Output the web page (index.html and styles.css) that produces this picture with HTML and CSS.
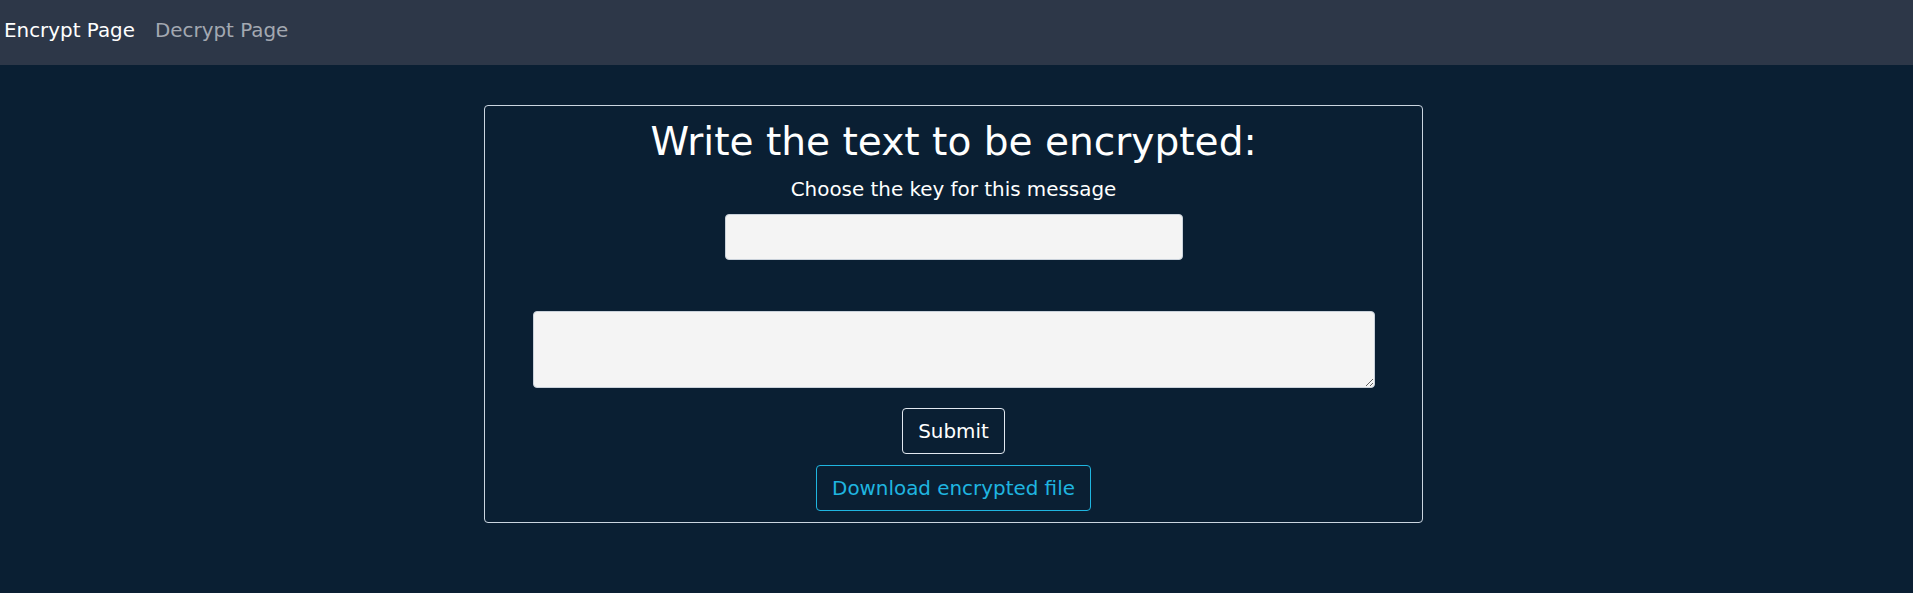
FILE: index.html
```html
<!DOCTYPE html>
<html lang="en">
<head>
<meta charset="utf-8">
<title>Encrypt Page</title>
<link rel="stylesheet" href="styles.css">
</head>
<body>
<nav class="navbar">
  <a class="nav-link active" href="#">Encrypt Page</a>
  <a class="nav-link" href="#">Decrypt Page</a>
</nav>
<main class="page">
  <form class="card">
    <h1 class="title">Write the text to be encrypted:</h1>
    <label class="label" for="key">Choose the key for this message</label>
    <input class="key-input" id="key" type="text">
    <textarea class="message"></textarea>
    <button class="btn btn-submit" type="button">Submit</button>
    <button class="btn btn-download" type="button">Download encrypted file</button>
  </form>
</main>
</body>
</html>
```
FILE: styles.css
```css
html, body {
  margin: 0;
  padding: 0;
}
body {
  background: #0a1f33;
  font-family: "DejaVu Sans", "Noto Sans", sans-serif;
  color: #ffffff;
  min-height: 593px;
}
.navbar {
  height: 65px;
  background: #2d3748;
  display: flex;
  align-items: center;
  gap: 20px;
  padding-left: 4px;
  padding-bottom: 3px;
  box-sizing: border-box;
}
.nav-link {
  font-size: 19.9px;
  line-height: 1;
  color: #a3a8b1;
  text-decoration: none;
}
.nav-link.active {
  color: #ffffff;
}
.page {
  display: flex;
  justify-content: center;
  padding-top: 40px;
  padding-right: 6px;
}
.card {
  width: 939px;
  box-sizing: border-box;
  border: 1px solid #cbd5e0;
  border-radius: 4px;
  padding: 16px 0 11px;
  display: flex;
  flex-direction: column;
  align-items: center;
}
.title {
  margin: 0;
  font-size: 39.1px;
  font-weight: 400;
  line-height: 1;
}
.label {
  margin-top: 19px;
  font-size: 19.9px;
  line-height: 1;
}
.key-input {
  margin-top: 14px;
  width: 458px;
  height: 46px;
  box-sizing: border-box;
  background: #f4f4f4;
  border: 1px solid #c9d1da;
  border-radius: 4px;
  font-family: inherit;
  font-size: 18px;
  padding: 0 10px;
}
.message {
  margin-top: 51px;
  width: 842px;
  height: 77px;
  box-sizing: border-box;
  background: #f4f4f4;
  border: 1px solid #c9d1da;
  border-radius: 4px;
  font-family: inherit;
  font-size: 18px;
}
.btn {
  height: 46px;
  box-sizing: border-box;
  padding: 2px 15px 0;
  background: transparent;
  border-radius: 4px;
  font-family: inherit;
  font-size: 19.9px;
  line-height: 1;
}
.btn-submit {
  margin-top: 20px;
  color: #ffffff;
  border: 1px solid #e2e8f0;
}
.btn-download {
  margin-top: 11px;
  color: #1fb5e0;
  border: 1px solid #1fb5e0;
}
```
